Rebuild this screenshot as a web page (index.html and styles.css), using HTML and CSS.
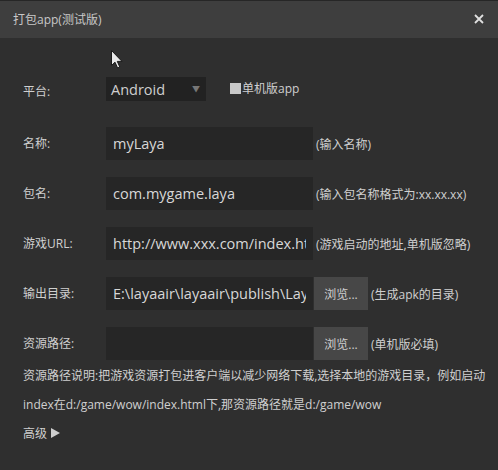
FILE: index.html
```html
<!DOCTYPE html>
<html lang="zh-CN">
<head>
<meta charset="utf-8">
<title>打包app(测试版)</title>
<link rel="stylesheet" href="styles.css">
</head>
<body>
<div class="dialog">
  <div class="titlebar">
    <span class="title">打包app(测试版)</span>
    <svg class="close" width="10" height="10" viewBox="0 0 10 10"><path d="M1 1L9 9M9 1L1 9" stroke="#e0e0e0" stroke-width="1.8"/></svg>
  </div>
  <div class="content">
    <div class="row row-platform">
      <span class="label label-platform">平台:</span>
      <div class="select"><span>Android</span><span class="caret">▼</span></div>
      <span class="check"><span class="box"></span>单机版app</span>
    </div>
    <div class="row">
      <span class="label">名称:</span>
      <input class="field" type="text" value="myLaya">
      <span class="hint">(输入名称)</span>
    </div>
    <div class="row">
      <span class="label">包名:</span>
      <input class="field" type="text" value="com.mygame.laya">
      <span class="hint">(输入包名称格式为:xx.xx.xx)</span>
    </div>
    <div class="row">
      <span class="label">游戏URL:</span>
      <input class="field" type="text" value="http://www.xxx.com/index.html">
      <span class="hint">(游戏启动的地址,单机版忽略)</span>
    </div>
    <div class="row">
      <span class="label">输出目录:</span>
      <input class="field" type="text" value="E:\layaair\layaair\publish\LayaProject">
      <span class="btn">浏览...</span>
      <span class="hint">(生成apk的目录)</span>
    </div>
    <div class="row">
      <span class="label">资源路径:</span>
      <input class="field" type="text" value="">
      <span class="btn">浏览...</span>
      <span class="hint">(单机版必填)</span>
    </div>
    <p class="desc">资源路径说明:把游戏资源打包进客户端以减少网络下载,选择本地的游戏目录，例如启动<br>index在d:/game/wow/index.html下,那资源路径就是d:/game/wow</p>
    <div class="advanced">高级 <span class="tri"></span></div>
  </div>
  <svg class="cursor" width="12" height="19" viewBox="0 0 12 19"><path d="M0.5 0.5L0.5 15.5L4 12.2L6.6 18L8.8 17L6.3 11.4L11 11.4Z" fill="#e8e8e8" stroke="#1a1a1a" stroke-width="1"/></svg>
</div>
</body>
</html>
```

FILE: styles.css
```css
* { box-sizing: border-box; }
html, body {
  margin: 0;
  padding: 0;
  background: #2f2f2f;
}
body {
  font-family: "Open Sans", "Noto Sans CJK SC", sans-serif;
  font-size: 12px;
  color: #cfcfcf;
}
.dialog {
  position: relative;
  width: 498px;
  height: 470px;
  background: #2f2f2f;
  border-top: 1px solid #262626;
  overflow: hidden;
}
.titlebar {
  height: 37px;
  background: #3e3e3e;
  display: flex;
  align-items: center;
  justify-content: space-between;
  padding: 0 14px 0 13px;
}
.title {
  color: #c8c8c8;
  font-size: 12px;
  line-height: 16px;
}
.close { display: block; margin-top: -1px; }
.content {
  padding: 39px 0 0 23px;
}
.row {
  display: flex;
  align-items: center;
  height: 33px;
  margin-bottom: 17px;
}
.row-platform {
  height: 24px;
  margin-bottom: 26px;
}
.label {
  width: 83px;
  flex: none;
  line-height: 16px;
}
.label-platform { margin-top: 6px; }
.select {
  width: 100px;
  height: 24px;
  background: #222222;
  display: flex;
  align-items: center;
  justify-content: space-between;
  padding: 0 6px 0 5px;
  font-size: 14.5px;
  color: #cfcfcf;
}
.caret {
  font-size: 8px;
  color: #777;
  margin-top: -2px;
}
.check {
  display: flex;
  align-items: center;
  margin-left: 24px;
  margin-top: -2px;
  color: #cfcfcf;
}
.box {
  width: 11px;
  height: 11px;
  background: #c8c8c8;
  margin-right: 1px;
}
.field {
  width: 207px;
  height: 33px;
  flex: none;
  border: none;
  outline: none;
  background: #262626;
  color: #d8d8d8;
  font-family: "Open Sans", "Noto Sans CJK SC", sans-serif;
  font-size: 14.5px;
  padding: 0 7px;
  margin: 0;
}
.btn {
  width: 54px;
  height: 33px;
  flex: none;
  margin-left: 1px;
  background: #474747;
  color: #cfcfcf;
  display: flex;
  align-items: center;
  justify-content: center;
}
.hint {
  margin-left: 3px;
  line-height: 16px;
  margin-top: 2px;
}
.desc {
  margin: -16px 0 0 0;
  line-height: 29px;
}
.advanced {
  display: flex;
  align-items: center;
  height: 28px;
}
.tri {
  display: inline-block;
  width: 0;
  height: 0;
  border-top: 5px solid transparent;
  border-bottom: 5px solid transparent;
  border-left: 9px solid #cfcfcf;
  margin-left: 4px;
}
.cursor {
  position: absolute;
  left: 111px;
  top: 49px;
}
```
